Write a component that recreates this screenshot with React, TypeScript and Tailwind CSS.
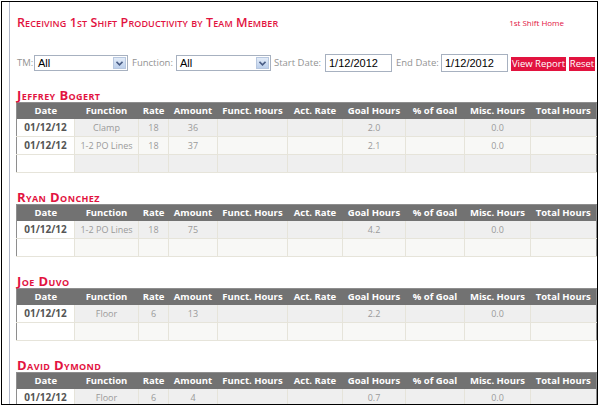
import React from "react";

const red = "text-[#e2133f]";

const teams = [
  {
    name: "Jeffrey Bogert",
    rows: [
      ["01/12/12", "Clamp", "18", "36", "2.0", "0.0"],
      ["01/12/12", "1-2 PO Lines", "18", "37", "2.1", "0.0"],
    ],
  },
  {
    name: "Ryan Donchez",
    rows: [["01/12/12", "1-2 PO Lines", "18", "75", "4.2", "0.0"]],
  },
  {
    name: "Joe Duvo",
    rows: [["01/12/12", "Floor", "6", "13", "2.2", "0.0"]],
  },
  {
    name: "David Dymond",
    rows: [["01/12/12", "Floor", "6", "4", "0.7", "0.0"]],
  },
];

const cols = [
  { label: "Date", w: "w-[58px]" },
  { label: "Function", w: "w-[64px]" },
  { label: "Rate", w: "w-[30px]" },
  { label: "Amount", w: "w-[49px]" },
  { label: "Funct. Hours", w: "w-[70px]" },
  { label: "Act. Rate", w: "w-[55px]" },
  { label: "Goal Hours", w: "w-[63px]" },
  { label: "% of Goal", w: "w-[59px]" },
  { label: "Misc. Hours", w: "w-[66px]" },
  { label: "Total Hours", w: "w-[66px]" },
];

const Select = ({ w }: { w: string }) => (
  <div className={`flex h-[16px] ${w} shrink-0 items-center border border-[#a7b1c0] bg-white`}>
    <span className="flex-1 pl-[3px] font-['Liberation_Sans',sans-serif] text-[11px] leading-none text-black">
      All
    </span>
    <span className="mr-px flex h-[12px] w-[13px] items-center justify-center border border-[#b7c7df] bg-gradient-to-b from-[#e3ecf8] to-[#bccfeb]">
      <svg width="7" height="5" viewBox="0 0 7 5">
        <path d="M0.5 0.8 L3.5 3.8 L6.5 0.8" stroke="#4a5e86" strokeWidth="1.6" fill="none" />
      </svg>
    </span>
  </div>
);

const DateInput = () => (
  <div className="flex h-[18px] w-[67px] shrink-0 items-center border border-[#a7b1c0] bg-white pl-[3px] font-['Liberation_Sans',sans-serif] text-[11px] text-black">
    1/12/2012
  </div>
);

const Label = ({ text, w }: { text: string; w: string }) => (
  <span className={`${w} shrink-0 whitespace-nowrap text-[9.5px] text-[#939393]`}>{text}</span>
);

const TeamTable = ({ rows }: { rows: string[][] }) => {
  const all = [...rows, ["", "", "", "", "", ""]];
  return (
    <table className="w-[580px] table-fixed border-collapse border border-[#8e8e8e]">
      <colgroup>
        {cols.map((c) => (
          <col key={c.label} className={c.w} />
        ))}
      </colgroup>
      <thead>
        <tr className="h-[16px] bg-[#727272]">
          {cols.map((c) => (
            <th key={c.label} className="p-0 text-center text-[9.5px] font-bold leading-none text-white">
              {c.label}
            </th>
          ))}
        </tr>
      </thead>
      <tbody>
        {all.map((r, i) => {
          const bg = i % 2 === 0 ? "bg-[#efefef]" : "bg-[#f8f8f6]";
          const cells = [r[0], r[1], r[2], r[3], "", "", r[4], "", r[5], ""];
          return (
            <tr key={i} className="h-[18px]">
              {cells.map((v, j) =>
                j === 0 ? (
                  <td key={j} className="border-b border-[#e6e4da] bg-white p-0 text-center text-[10px] font-bold text-[#555]">
                    {v}
                  </td>
                ) : (
                  <td key={j} className={`${bg} border-b border-l border-[#e6e4da] p-0 text-center text-[9px] text-[#9a9a9a]`}>
                    {v}
                  </td>
                )
              )}
            </tr>
          );
        })}
      </tbody>
    </table>
  );
};

export default function App() {
  return (
    <div className="h-[407px] w-[600px] overflow-hidden bg-white pl-px pt-px font-['Open_Sans',sans-serif]">
      <div className="flex h-[404px] w-[597px] overflow-hidden border border-black">
        <div className="ml-[7px] flex-1 overflow-hidden border-l border-[#b3b9ca] pl-[6px]">
          {/* title */}
          <div className="flex items-center justify-between pt-[11px]">
            <h1 className={`ml-px text-[12.5px] font-semibold leading-[20px] tracking-[0.1px] [font-variant:small-caps] ${red}`}>
              Receiving 1st Shift Productivity by Team Member
            </h1>
            <span className={`mr-[33px] text-[8px] ${red}`}>1st Shift Home</span>
          </div>

          {/* filters */}
          <div className="mt-[21px] flex h-[18px] items-center pl-px">
            <Label text="TM:" w="w-[17px]" />
            <Select w="w-[94px]" />
            <span className="ml-[4px]" />
            <Label text="Function:" w="w-[44px]" />
            <Select w="w-[95px]" />
            <span className="ml-[3px]" />
            <Label text="Start Date:" w="w-[51px]" />
            <DateInput />
            <span className="ml-[4px]" />
            <Label text="End Date:" w="w-[45px]" />
            <DateInput />
            <button className="ml-[3px] mt-[2px] h-[14px] w-[55px] shrink-0 whitespace-nowrap bg-[#e2133f] text-[9.5px] leading-none text-white">
              View Report
            </button>
            <button className="ml-[3px] mt-[2px] h-[14px] w-[26px] shrink-0 whitespace-nowrap bg-[#e2133f] text-[9.5px] leading-none text-white">
              Reset
            </button>
          </div>

          {/* per team member */}
          {teams.map((t, i) => (
            <div key={t.name} className={i === 0 ? "mt-[16px]" : "mt-[17px]"}>
              <h2 className={`ml-px text-[13px] font-bold leading-[14px] tracking-[0.4px] [font-variant:small-caps] ${red}`}>
                {t.name}
              </h2>
              <TeamTable rows={t.rows} />
            </div>
          ))}
        </div>
      </div>
    </div>
  );
}
